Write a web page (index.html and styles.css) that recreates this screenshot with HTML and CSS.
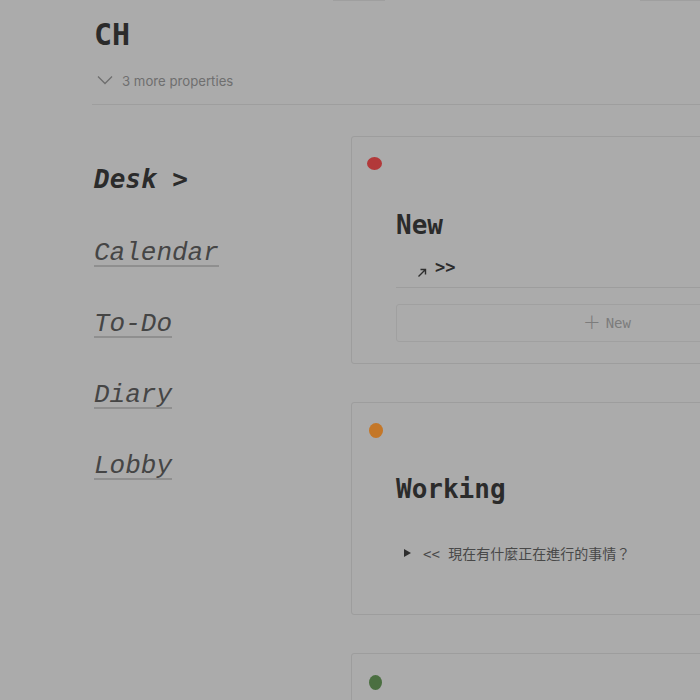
FILE: index.html
```html
<!DOCTYPE html>
<html>
<head>
<meta charset="utf-8">
<link rel="stylesheet" href="styles.css">
</head>
<body>
<div class="topbits"><span class="bit b1"></span><span class="bit b2"></span></div>
<div class="page">
  <header class="head">
    <h1 class="title">CH</h1>
    <div class="props">
      <svg class="chev" width="16" height="10" viewBox="0 0 16 10"><path d="M1 1.5 L8 8.5 L15 1.5" fill="none" stroke="#6e6e6e" stroke-width="1.3"/></svg>
      <span>3 more properties</span>
    </div>
  </header>
  <main class="main">
    <nav class="nav">
      <a class="nav-item current">Desk &gt;</a>
      <a class="nav-item link">Calendar</a>
      <a class="nav-item link">To-Do</a>
      <a class="nav-item link">Diary</a>
      <a class="nav-item link">Lobby</a>
    </nav>
    <section class="cards">
      <div class="card card-new">
        <span class="dot red"></span>
        <h2 class="card-title">New</h2>
        <div class="link-row">
          <svg class="arrow" width="10" height="10" viewBox="0 0 10 10"><path d="M1.5 8.5 L8.5 1.5 M3.5 1.5 H8.5 V6.5" fill="none" stroke="#2e2e2e" stroke-width="1.4"/></svg>
          <span class="gt">&gt;&gt;</span>
        </div>
        <div class="new-btn"><span class="plus">+</span> New</div>
      </div>
      <div class="card card-working">
        <span class="dot orange"></span>
        <h2 class="card-title">Working</h2>
        <div class="toggle">
          <span class="tri"></span>
          <span class="ttext">&lt;&lt; 現在有什麼正在進行的事情？</span>
        </div>
      </div>
      <div class="card card-done">
        <span class="dot green"></span>
      </div>
    </section>
  </main>
</div>
</body>
</html>
```
FILE: styles.css
```css
html, body {
  margin: 0;
  padding: 0;
  background: #ababab;
  overflow: hidden;
  width: 700px;
  height: 700px;
}
body {
  font-family: "DejaVu Sans Mono", monospace;
  color: #2c2c2c;
  position: relative;
}
.topbits { position: absolute; top: 0; left: 0; width: 700px; height: 1px; }
.bit { position: absolute; top: 0; height: 1px; background: #9f9f9f; }
.b1 { left: 333px; width: 52px; }
.b2 { left: 640px; width: 60px; }

.page {
  padding: 0 0 0 92px;
  width: 900px;
}
.head {
  border-bottom: 1px solid #9e9e9e;
  width: 608px;
}
.title {
  margin: 0;
  padding: 17px 0 0 2px;
  font-size: 30px;
  line-height: 36px;
  font-weight: bold;
  color: #2b2b2b;
}
.props {
  display: flex;
  align-items: center;
  gap: 9px;
  padding: 18px 0 13px 5px;
  font-family: "Inter", "Noto Sans", sans-serif;
  font-size: 13.2px;
  line-height: 20px;
  color: #6f6f6f;
}
.chev { display: block; margin-top: -2px; }

.main {
  display: flex;
  padding-top: 31px;
}
.nav {
  width: 257px;
  flex: none;
  display: flex;
  flex-direction: column;
  padding: 26px 0 0 2px;
  gap: 43px;
}
.nav-item {
  font-size: 26px;
  line-height: 34px;
  font-style: italic;
  align-self: flex-start;
}
.nav-item.current {
  font-weight: bold;
  color: #2b2b2b;
}
.nav-item.link {
  font-family: "Liberation Mono", monospace;
  color: #454545;
  border-bottom: 2px solid #8f8f8f;
  line-height: 28px;
  height: 26px;
}

.cards {
  display: flex;
  flex-direction: column;
  gap: 38px;
}
.card {
  width: 520px;
  border: 1px solid #9d9d9d;
  border-radius: 3px;
  padding: 20px 0 0 15px;
  box-sizing: border-box;
}
.card-new { height: 228px; }
.card-working { height: 213px; }
.card-done { height: 120px; padding-top: 21px; }
.dot {
  display: block;
  width: 14px;
  height: 14px;
  border-radius: 50%;
}
.dot.red { background: #b2393a; width: 15px; height: 13px; }
.dot.orange { background: #c47728; margin-left: 2px; height: 15px; }
.dot.green { background: #4b6f41; margin-left: 2px; width: 13px; height: 15px; }

.card-title {
  margin: 0;
  font-size: 26px;
  line-height: 32px;
  font-weight: bold;
  color: #2b2b2b;
  padding-left: 29px;
}
.card-new .card-title { margin-top: 39px; }
.card-working .card-title { margin-top: 35px; }

.link-row {
  margin-left: 29px;
  display: flex;
  align-items: flex-start;
  gap: 8px;
  padding: 19px 0 7px 21px;
  height: 20px;
  border-bottom: 1px solid #9d9d9d;
}
.arrow { display: block; margin-top: 8px; }
.gt { font-size: 17px; font-weight: bold; line-height: 18px; margin-top: -2px; }

.new-btn {
  margin: 16px 0 0 29px;
  height: 38px;
  border: 1px solid #a0a0a0;
  border-radius: 3px;
  box-sizing: border-box;
  display: flex;
  align-items: center;
  justify-content: center;
  font-size: 14px;
  color: #7c7c7c;
  gap: 5px;
  width: 422px;
}
.plus { font-family: "DejaVu Sans", sans-serif; font-weight: 300; font-size: 21px; line-height: 20px; color: #7c7c7c; margin-top: -2px; }

.toggle {
  margin: 38px 0 0 37px;
  display: flex;
  align-items: center;
  gap: 12px;
  font-size: 14px;
  color: #484848;
}
.tri {
  width: 0; height: 0;
  border-left: 7px solid #2e2e2e;
  border-top: 4.5px solid transparent;
  border-bottom: 4.5px solid transparent;
}
.ttext { font-family: "DejaVu Sans Mono", "Noto Sans CJK TC", monospace; font-size: 14px; letter-spacing: 0; }
```
